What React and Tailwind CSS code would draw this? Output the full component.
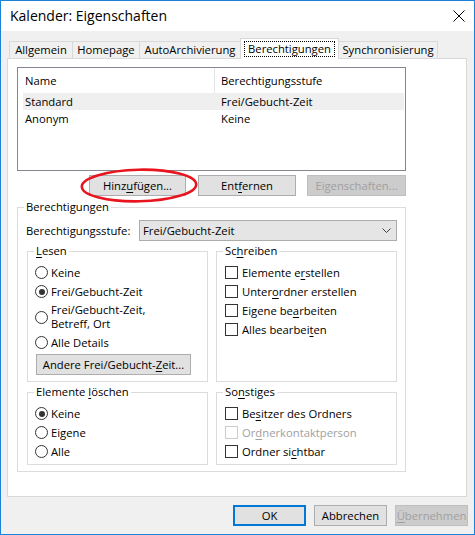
import React from "react";

const U = ({ children }) => (
  <span className="underline underline-offset-[2px] decoration-[1px]">{children}</span>
);

function Radio({ checked }) {
  return (
    <span className="w-[13px] h-[13px] rounded-full border border-[#333333] bg-white flex items-center justify-center shrink-0">
      {checked && <span className="w-[6px] h-[6px] rounded-full bg-[#333333]" />}
    </span>
  );
}

function Check({ disabled }) {
  return (
    <span
      className={
        disabled
          ? "w-[13px] h-[13px] border border-[#cccccc] bg-white shrink-0"
          : "w-[13px] h-[13px] border border-[#333333] bg-white shrink-0"
      }
    />
  );
}

function RadioRow({ checked, children, tall }) {
  return (
    <div className={tall ? "h-[32px] flex items-center pl-[7px]" : "h-[19px] flex items-center pl-[7px]"}>
      <Radio checked={checked} />
      <span className={tall ? "ml-[3px] leading-[14px]" : "ml-[3px]"}>{children}</span>
    </div>
  );
}

function CheckRow({ disabled, children }) {
  return (
    <div className="h-[19px] flex items-center pl-[8px]">
      <Check disabled={disabled} />
      <span className={disabled ? "ml-[4px] text-[#a0a0a0]" : "ml-[4px]"}>{children}</span>
    </div>
  );
}

function Group({ legend, children }) {
  return (
    <fieldset className="border border-[#dcdcdc] min-w-0 h-full">
      <legend className="ml-[6px] px-[2px] leading-[16px]">{legend}</legend>
      {children}
    </fieldset>
  );
}

function Btn({ children, className, disabled }) {
  return (
    <div
      className={
        (disabled
          ? "bg-[#cccccc] border border-[#bfbfbf] text-[#a0a0a0] "
          : "bg-[#e1e1e1] border border-[#adadad] ") +
        "h-[21px] flex items-center justify-center " +
        (className || "")
      }
    >
      {children}
    </div>
  );
}

export default function App() {
  return (
    <div className="w-[475px] h-[535px] border border-[#1a82d9] bg-[#f0f0f0] flex flex-col font-['Open_Sans',sans-serif] text-[11.25px] leading-[16px] text-black select-none">
      {/* Title bar */}
      <div className="h-[30px] bg-white flex items-center justify-between pl-[9px] pr-[8px] shrink-0">
        <span className="text-[14px] leading-[20px]">Kalender: Eigenschaften</span>
        <svg width="12" height="12" viewBox="0 0 12 12" className="mr-[1px]">
          <path d="M0.5 0.5 L11.5 11.5 M11.5 0.5 L0.5 11.5" stroke="#000" strokeWidth="1" fill="none" />
        </svg>
      </div>

      {/* Tabs */}
      <div className="h-[27px] flex items-end pl-[8px] shrink-0">
        <div className="w-[64px] h-[17px] border-l border-t border-r border-[#d9d9d9] flex items-center justify-center">
          Allgemein
        </div>
        <div className="w-[68px] h-[17px] -ml-px border-l border-t border-r border-[#d9d9d9] flex items-center justify-center">
          Homepage
        </div>
        <div className="w-[102px] h-[17px] -ml-px border-l border-t border-r border-[#d9d9d9] flex items-center justify-center">
          AutoArchivierung
        </div>
        <div className="relative z-10 w-[99px] h-[21px] -ml-px -mb-px bg-white border-l border-t border-r border-[#d9d9d9] flex items-center justify-center">
          <span className="h-[16px] px-[3px] border border-dotted border-black flex items-center">Berechtigungen</span>
        </div>
        <div className="w-[100px] h-[17px] -ml-px border-l border-t border-r border-[#d9d9d9] flex items-center justify-center">
          Synchronisierung
        </div>
      </div>

      {/* Panel */}
      <div className="ml-[6px] w-[460px] h-[439px] shrink-0 bg-white border border-[#d9d9d9] pt-[8px] pl-[9px] flex flex-col">
        {/* List */}
        <div className="w-[389px] h-[104px] border border-[#828790] bg-white flex flex-col shrink-0">
          <div className="h-[25px] flex shrink-0">
            <div className="w-[197px] pl-[7px] border-r border-[#e5e5e5] flex items-center">Name</div>
            <div className="pl-[6px] flex items-center">Berechtigungsstufe</div>
          </div>
          <div className="ml-[5px] mr-[1px] h-[17px] bg-[#efefef] flex items-center">
            <div className="w-[198px] pl-[2px]">Standard</div>
            <div>Frei/Gebucht-Zeit</div>
          </div>
          <div className="ml-[5px] mr-[1px] h-[17px] flex items-center">
            <div className="w-[198px] pl-[2px]">Anonym</div>
            <div>Keine</div>
          </div>
        </div>

        {/* Buttons */}
        <div className="mt-[4px] flex pl-[72px] shrink-0">
          <div className="relative">
            <Btn className="w-[97px]">
              <span>
                Hinz<U>u</U>fügen...
              </span>
            </Btn>
            <svg
              className="absolute left-[-9px] top-[-7px] pointer-events-none"
              width="118"
              height="35"
              viewBox="0 0 118 35"
            >
              <ellipse cx="59" cy="17.5" rx="57.2" ry="15.8" fill="none" stroke="#e8141e" strokeWidth="2.6" transform="rotate(-1.2 59 17.5)" />
            </svg>
          </div>
          <Btn className="w-[98px] ml-[12px]">
            <span>
              Ent<U>f</U>ernen
            </span>
          </Btn>
          <Btn className="w-[99px] ml-[11px]" disabled>
            <span>
              Ei<U>g</U>enschaften...
            </span>
          </Btn>
        </div>

        {/* Berechtigungen group */}
        <fieldset className="mt-[3px] w-[389px] border border-[#dcdcdc] pb-[6px] shrink-0">
          <legend className="ml-[6px] px-[2px] leading-[16px]">Berechtigungen</legend>
          <div className="mt-[5px] flex items-center">
            <div className="w-[121px] pl-[8px]">
              Berechti<U>g</U>ungsstufe:
            </div>
            <div className="w-[258px] h-[21px] bg-[#e5e5e5] border border-[#acacac] flex items-center justify-between pl-[3px] pr-[5px]">
              <span>Frei/Gebucht-Zeit</span>
              <svg width="9" height="5" viewBox="0 0 9 5">
                <path d="M0.5 0.5 L4.5 4.5 L8.5 0.5" stroke="#404040" strokeWidth="1" fill="none" />
              </svg>
            </div>
          </div>

          <div className="mt-[2px] ml-[9px] w-[370px] grid grid-cols-[181px_181px] gap-x-[8px]">
            <Group
              legend={
                <>
                  <U>L</U>esen
                </>
              }
            >
              <div className="pt-[4px] pb-[6px]">
                <RadioRow>Keine</RadioRow>
                <RadioRow checked>Frei/Gebucht-Zeit</RadioRow>
                <RadioRow tall>
                  Frei/Gebucht-Zeit,
                  <br />
                  Betreff, Ort
                </RadioRow>
                <RadioRow>Alle Details</RadioRow>
                <Btn className="mt-[2px] ml-[8px] w-[155px]">
                  <span>
                    Andere Frei/Gebucht-<U>Z</U>eit...
                  </span>
                </Btn>
              </div>
            </Group>
            <Group
              legend={
                <>
                  Sc<U>h</U>reiben
                </>
              }
            >
              <div className="pt-[4px]">
                <CheckRow>
                  Elemente e<U>r</U>stellen
                </CheckRow>
                <CheckRow>
                  Unter<U>o</U>rdner erstellen
                </CheckRow>
                <CheckRow>
                  Eigene be<U>a</U>rbeiten
                </CheckRow>
                <CheckRow>
                  Alles bearbei<U>t</U>en
                </CheckRow>
              </div>
            </Group>

            <div className="mt-[2px]">
              <Group
                legend={
                  <>
                    Elemente <U>l</U>öschen
                  </>
                }
              >
                <div className="pt-[4px] pb-[3px]">
                  <RadioRow checked>Keine</RadioRow>
                  <RadioRow>Eigene</RadioRow>
                  <RadioRow>Alle</RadioRow>
                </div>
              </Group>
            </div>
            <div className="mt-[2px]">
              <Group
                legend={
                  <>
                    So<U>n</U>stiges
                  </>
                }
              >
                <div className="pt-[4px] pb-[3px]">
                  <CheckRow>
                    Be<U>s</U>itzer des Ordners
                  </CheckRow>
                  <CheckRow disabled>
                    Or<U>d</U>nerkontaktperson
                  </CheckRow>
                  <CheckRow>
                    Ordner si<U>c</U>htbar
                  </CheckRow>
                </div>
              </Group>
            </div>
          </div>
        </fieldset>
      </div>

      {/* Bottom buttons */}
      <div className="mt-[8px] flex justify-end pr-[6px] gap-x-[8px] shrink-0">
        <div className="w-[73px] h-[21px] bg-[#e1e1e1] border-2 border-[#0078d7] flex items-center justify-center">
          OK
        </div>
        <Btn className="w-[73px]">Abbrechen</Btn>
        <Btn className="w-[73px]" disabled>
          <span>
            <U>Ü</U>bernehmen
          </span>
        </Btn>
      </div>
    </div>
  );
}
